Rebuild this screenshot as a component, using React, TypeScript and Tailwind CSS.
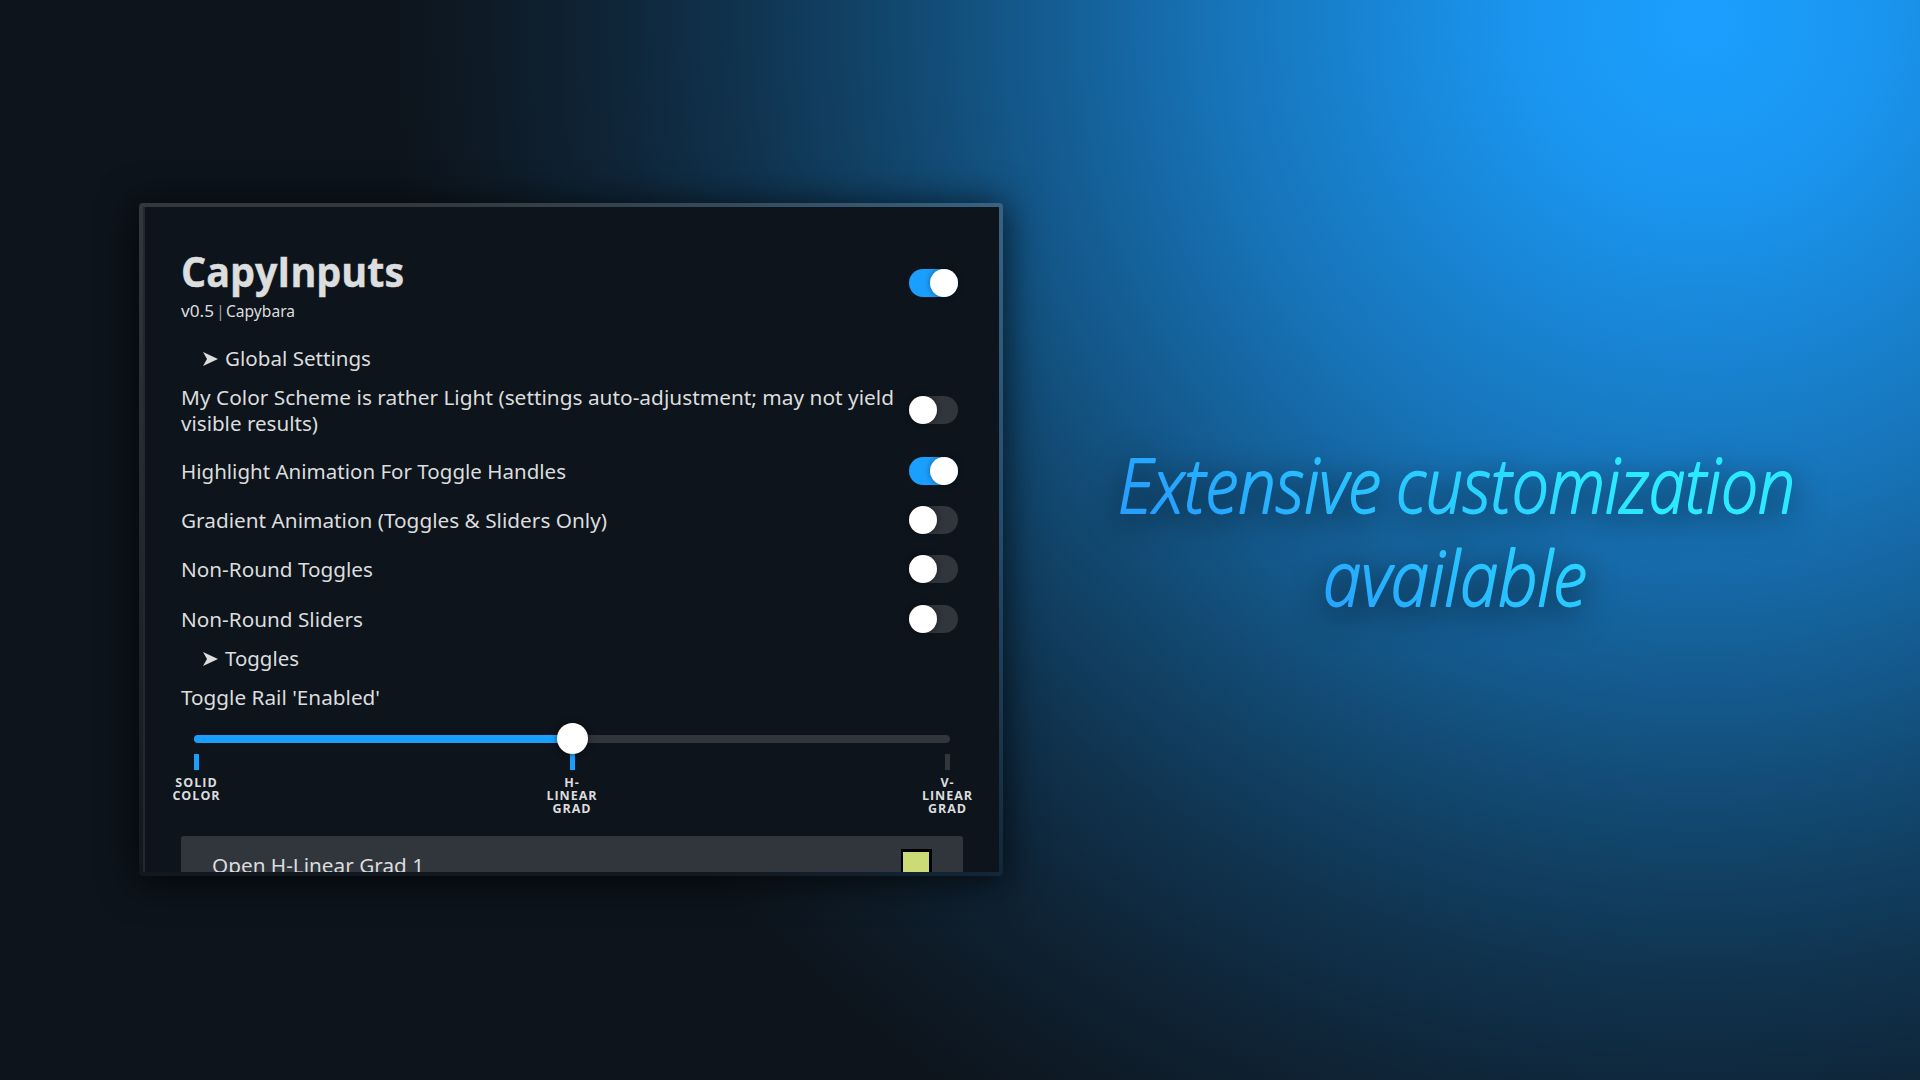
import React from "react";

const FONT = "font-['Noto_Sans','Open_Sans',sans-serif]";

function Toggle({ on }: { on?: boolean }) {
  return (
    <div className={`flex h-7 w-[49px] shrink-0 rounded-full ${on ? "justify-end bg-[#1b9fff]" : "justify-start bg-[#31353c]"}`}>
      <div className="h-7 w-7 rounded-full bg-white shadow-[0_0_6px_rgba(0,0,0,0.4)]" />
    </div>
  );
}

function Line({ text, width, className = "" }: { text: string; width: number; className?: string }) {
  return (
    <svg className={`block h-[26px] shrink-0 overflow-visible ${className}`} width={width} height="26">
      <text x="0" y="21" textLength={width} lengthAdjust="spacingAndGlyphs" fill="#dcddde">{text}</text>
    </svg>
  );
}

function Section({ title, width }: { title: string; width: number }) {
  return (
    <div className="flex h-[26px] items-center pl-[22px]">
      <svg width="15" height="14" viewBox="0 0 15 14" className="mt-[2px] mr-[7px]">
        <path d="M0 0 L15 7 L0 14 L4 7Z" fill="#dcddde" />
      </svg>
      <Line text={title} width={width} />
    </div>
  );
}

function Row({ text, width, on }: { text: string; width: number; on?: boolean }) {
  return (
    <div className="flex h-[49.3px] items-center justify-between">
      <Line text={text} width={width} />
      <Toggle on={on} />
    </div>
  );
}

function Tick({ lines, active, className = "" }: { lines: string[]; active?: boolean; className?: string }) {
  return (
    <div className={`flex flex-col items-center ${className}`}>
      <div className={`h-4 w-[5px] ${active ? "bg-[#1b9fff]" : "bg-[#31353c]"}`} />
      <div className="mt-[6px] text-center font-['Open_Sans',sans-serif] text-[12.5px] leading-[13px] font-bold tracking-[1px] whitespace-nowrap">
        {lines.map((l) => (
          <div key={l}>{l}</div>
        ))}
      </div>
    </div>
  );
}

export default function App() {
  return (
    <div className={`flex h-[1080px] w-[1920px] overflow-hidden bg-[radial-gradient(circle_at_1700px_20px,#1b9fff_0px,#1a95ef_180px,#1774b9_476px,#145b90_660px,#124a73_782px,#10324d_965px,#0f2538_1088px,#0e1b27_1210px,#0d141c_1310px)] text-[#dcddde] ${FONT}`}>
      <div className="mt-[203px] ml-[139px] h-[673px] w-[864px] shrink-0 rounded-[4px] bg-linear-to-b from-[#8a8a8a]/30 to-[#8a8a8a]/3 p-1 shadow-[0_4px_36px_4px_rgba(0,0,0,0.65)]">
        <div className="h-[665px] overflow-hidden border-l-2 border-[#25272e] bg-[#0d141b] pr-[41px] pl-[36px] text-[20px]">
          <div className="flex h-[130px] items-start justify-between pt-[43px]">
            <div>
              <svg className="block overflow-visible font-['Open_Sans',sans-serif]" width="223" height="48">
                <text x="0" y="37" fontSize="42" fontWeight="700" textLength="223" lengthAdjust="spacingAndGlyphs" fill="#dcddde" stroke="#dcddde" strokeWidth="0.5">CapyInputs</text>
              </svg>
              <svg className="block overflow-visible" width="114" height="22">
                <text y="19" fontSize="16" fill="#dcddde">
                  <tspan x="0" textLength="33" lengthAdjust="spacingAndGlyphs">v0.5</tspan>{" "}
                  <tspan x="35" fillOpacity="0.7">|</tspan>{" "}
                  <tspan x="45" textLength="69" lengthAdjust="spacingAndGlyphs">Capybara</tspan>
                </text>
              </svg>
            </div>
            <div className="pt-[18.5px]"><Toggle on /></div>
          </div>
          <div className="pt-[8px]"><Section title="Global Settings" width={146} /></div>
          <div className="mt-[13px] flex h-[52px] items-center justify-between">
            <div>
              <Line text="My Color Scheme is rather Light (settings auto-adjustment; may not yield" width={713} />
              <Line text="visible results)" width={137} />
            </div>
            <Toggle />
          </div>
          <div className="mt-[10px]">
            <Row text="Highlight Animation For Toggle Handles" width={385} on />
            <Row text="Gradient Animation (Toggles & Sliders Only)" width={426} />
            <Row text="Non-Round Toggles" width={192} />
            <Row text="Non-Round Sliders" width={182} />
          </div>
          <div className="pt-[2px]"><Section title="Toggles" width={74} /></div>
          <Line text="Toggle Rail 'Enabled'" width={199} className="mt-[13px]" />
          <div className="mt-[25px] ml-[13px] h-2 w-[756px] rounded-full bg-[#31353c]">
            <div className="h-2 w-1/2 rounded-full bg-[#1b9fff]" />
          </div>
          <div className="relative mt-[11px] ml-[-14px] flex h-[82px] w-[810px] justify-between">
            <Tick lines={["SOLID", "COLOR"]} active className="w-[59px]" />
            <Tick lines={["H-", "LINEAR", "GRAD"]} active className="w-[60px]" />
            <Tick lines={["V-", "LINEAR", "GRAD"]} className="w-[59px]" />
            <div className="absolute top-[-31px] left-[389.5px] h-[31px] w-[31px] rounded-full bg-white shadow-[0_0_6px_rgba(0,0,0,0.5)]" />
          </div>
          <div className="flex h-[60px] w-[782px] items-start justify-between rounded-[3px] bg-[#31353c] pt-[13px] pr-[31px] pl-[31px]">
            <Line text="Open H-Linear Grad 1" width={212} className="mt-[3px]" />
            <div className="h-[36px] w-[31px] border-x-2 border-t-[3px] border-r-[3px] border-black bg-[#cbdb76]" />
          </div>
        </div>
      </div>
      <div className="mt-[440px] ml-[112px] w-[685px]">
        <svg width="685" height="200" className="overflow-visible drop-shadow-[0_8px_16px_rgba(0,0,0,0.75)]">
          <defs>
            <linearGradient id="headline" gradientUnits="userSpaceOnUse" x1="35" y1="60" x2="196" y2="-170">
              <stop offset="0" stopColor="#269fff" />
              <stop offset="1" stopColor="#2beaff" />
            </linearGradient>
          </defs>
          <g fill="url(#headline)" stroke="url(#headline)" strokeWidth="1.8" strokeLinejoin="round" fontFamily="Open Sans" fontStyle="italic" fontWeight="300" fontSize="75">
            <text y="73">
              <tspan x="3" textLength="263" lengthAdjust="spacingAndGlyphs">Extensive</tspan>{" "}
              <tspan x="281" textLength="399" lengthAdjust="spacingAndGlyphs">customization</tspan>
            </text>
            <text x="208" y="166" textLength="264" lengthAdjust="spacingAndGlyphs">available</text>
          </g>
        </svg>
      </div>
    </div>
  );
}
